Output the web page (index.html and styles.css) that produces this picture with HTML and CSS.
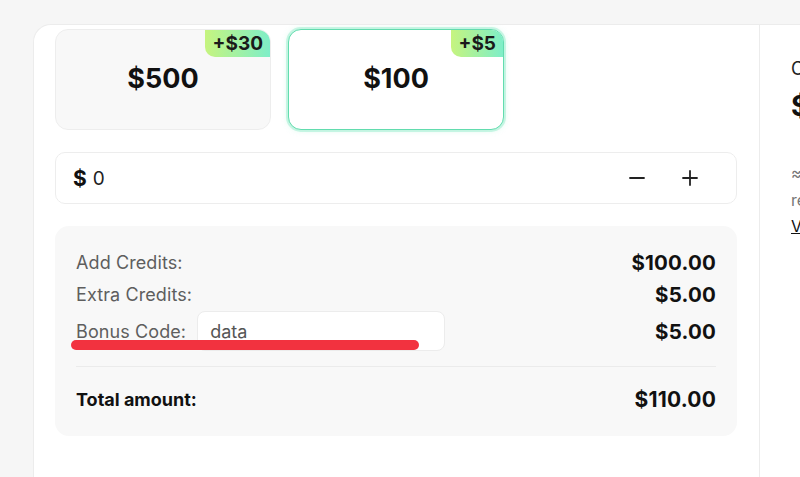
FILE: index.html
```html
<!DOCTYPE html>
<html lang="en">
<head>
<meta charset="utf-8">
<title>Add Credits</title>
<link rel="stylesheet" href="styles.css">
</head>
<body>
<div class="shell">
  <section class="main">
    <div class="packages">
      <div class="pkg">
        <span class="badge">+$30</span>
        <span class="pkg-price">$500</span>
      </div>
      <div class="pkg pkg-active">
        <span class="badge">+$5</span>
        <span class="pkg-price">$100</span>
      </div>
    </div>

    <div class="amount">
      <span class="cur">$</span>
      <span class="amount-val">0</span>
      <div class="steppers">
        <button class="step" aria-label="decrease">
          <svg width="16" height="16" viewBox="0 0 16 16"><path d="M1 8h14" stroke="#222" stroke-width="1.8" stroke-linecap="round"/></svg>
        </button>
        <button class="step" aria-label="increase">
          <svg width="16" height="16" viewBox="0 0 16 16"><path d="M1 8h14M8 1v14" stroke="#222" stroke-width="1.8" stroke-linecap="round"/></svg>
        </button>
      </div>
    </div>

    <div class="summary">
      <div class="row r1"><span class="label">Add Credits:</span><span class="val">$100.00</span></div>
      <div class="row r2"><span class="label">Extra Credits:</span><span class="val">$5.00</span></div>
      <div class="row r3">
        <div class="bonus"><span class="label">Bonus Code:</span><span class="code">data</span></div>
        <span class="val">$5.00</span>
      </div>
      <div class="divider"></div>
      <div class="row total"><span class="tlabel">Total amount:</span><span class="tval">$110.00</span></div>
      <div class="mark"></div>
    </div>
  </section>
  <aside class="side">
    <div class="s-title">Current balance</div>
    <div class="s-big">$0.00</div>
    <div class="s-note">≈ 0 credits</div>
    <div class="s-note">remaining</div>
    <a class="s-link" href="#">View history</a>
  </aside>
</div>
</body>
</html>
```

FILE: styles.css
```css
html, body {
  margin: 0;
  padding: 0;
}
body {
  background: #f6f6f6;
  font-family: Inter, "Noto Sans", sans-serif;
  color: #111;
  width: 800px;
  height: 477px;
  overflow: hidden;
}
.shell {
  margin: 24px 0 0 33px;
  display: flex;
  background: #fff;
  border-top: 1px solid #ececec;
  border-left: 1px solid #ececec;
  border-top-left-radius: 18px;
  height: 460px;
  overflow: hidden;
}
.main {
  width: 682px;
  flex: none;
  padding: 4px 22px 0 21px;
  border-right: 1px solid #ececec;
  position: relative;
}
.packages {
  display: grid;
  grid-template-columns: repeat(3, 216px);
  column-gap: 17px;
}
.pkg {
  position: relative;
  height: 99px;
  border: 1px solid #ededed;
  background: #f8f8f8;
  border-radius: 13px;
  display: flex;
  align-items: center;
  justify-content: center;
}
.pkg-active {
  background: #fff;
  border: 1.5px solid #62dcae;
  box-shadow: 0 0 0 2px rgba(120, 232, 190, 0.35), 0 0 6px rgba(120, 232, 190, 0.35);
}
.pkg-price {
  font-size: 27px;
  font-weight: 700;
  letter-spacing: 0;
  margin-top: -2px;
}
.badge {
  position: absolute;
  top: 0;
  right: 0;
  height: 27px;
  padding: 0 7px 0 8px;
  display: flex;
  align-items: center;
  font-size: 19px;
  font-weight: 700;
  color: #1a1a1a;
  background: linear-gradient(90deg, #c6f47f 0%, #7eeec8 100%);
  border-top-right-radius: 12px;
  border-bottom-left-radius: 10px;
}
.amount {
  margin-top: 22px;
  height: 50px;
  border: 1px solid #ededed;
  border-radius: 10px;
  display: flex;
  align-items: center;
  padding: 0 38px 0 17px;
}
.cur {
  font-size: 21px;
  font-weight: 700;
  margin-right: 6px;
}
.amount-val {
  font-size: 19px;
  color: #222;
}
.steppers {
  margin-left: auto;
  display: flex;
  gap: 37px;
}
.step {
  border: 0;
  background: none;
  padding: 0;
  width: 16px;
  height: 18px;
  display: flex;
  align-items: center;
  justify-content: center;
  cursor: pointer;
}
.summary {
  position: relative;
  margin-top: 22px;
  height: 210px;
  box-sizing: border-box;
  background: #f8f8f8;
  border-radius: 14px;
  padding: 24px 21px 0 21px;
}
.row {
  display: flex;
  align-items: center;
  justify-content: space-between;
}
.r1, .r2 {
  height: 24px;
}
.r2 {
  margin-top: 8px;
}
.r3 {
  margin-top: 5px;
  height: 40px;
}
.label {
  font-size: 18px;
  color: #5e5e5e;
  letter-spacing: 0.1px;
}
.val {
  font-size: 20.5px;
  font-weight: 700;
  color: #111;
  letter-spacing: 0.2px;
}
.bonus {
  display: flex;
  align-items: center;
  gap: 11px;
}
.code {
  box-sizing: border-box;
  width: 248px;
  height: 40px;
  background: #fff;
  border: 1px solid #ececec;
  border-radius: 8px;
  padding: 0 12px;
  display: flex;
  align-items: center;
  font-size: 18px;
  color: #555;
}
.divider {
  margin-top: 15px;
  height: 1px;
  background: #ebebeb;
}
.total {
  margin-top: 20px;
  height: 24px;
}
.tlabel {
  font-size: 18px;
  font-weight: 700;
}
.tval {
  font-size: 21px;
  font-weight: 700;
  letter-spacing: 0.2px;
}
.mark {
  position: absolute;
  left: 16px;
  top: 114px;
  width: 348px;
  height: 10px;
  background: #f2323f;
  border-radius: 5px;
}
.side {
  flex: 1;
  padding: 32px 0 0 31px;
  white-space: nowrap;
  overflow: hidden;
  min-width: 0;
}
.s-title {
  font-size: 18px;
  color: #222;
  line-height: 24px;
}
.s-big {
  font-size: 28px;
  font-weight: 700;
  line-height: 34px;
  margin-top: 8px;
}
.s-note {
  font-size: 16px;
  color: #777;
  line-height: 26px;
}
.s-big + .s-note {
  margin-top: 38px;
}
.s-link {
  display: block;
  font-size: 16px;
  color: #111;
  text-decoration: underline;
  line-height: 26px;
}
```
